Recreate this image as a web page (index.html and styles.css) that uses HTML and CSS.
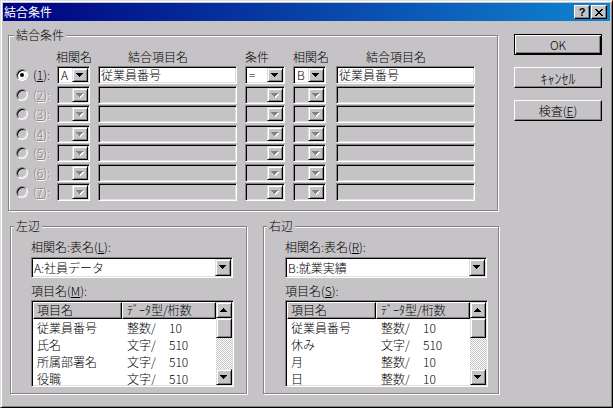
FILE: index.html
```html
<!DOCTYPE html>
<html lang="ja">
<head>
<meta charset="utf-8">
<title>結合条件</title>
<link rel="stylesheet" href="styles.css">
</head>
<body>
<div class="window">
  <div class="titlebar">
    <span class="title">結合条件</span>
    <div class="caps">
      <span class="cap q">?</span>
      <span class="cap"><svg width="8" height="7" viewBox="0 0 8 7"><path d="M0 0h2v1H0zM6 0h2v1H6zM1 1h2v1H1zM5 1h2v1H5zM2 2h4v1H2zM3 3h2v1H3zM2 4h4v1H2zM1 5h2v1H1zM5 5h2v1H5zM0 6h2v1H0zM6 6h2v1H6z"/></svg></span>
    </div>
  </div>
  <div class="client">
    <div class="main">
      <div class="group g-join">
        <span class="glabel">結合条件</span>
        <div class="hdr">
          <span class="c-radio"></span><span class="c-lbl"></span>
          <span class="c-a h ha">相関名</span>
          <span class="c-f1 h hf">結合項目名</span>
          <span class="c-cond h">条件</span>
          <span class="c-b h">相関名</span>
          <span class="c-f2 h hf">結合項目名</span>
        </div>
        <div class="rows">
          <div class="row">
            <span class="c-radio radio on"></span>
            <span class="c-lbl">(<u>1</u>):</span>
            <div class="c-a sunk combo"><span class="v">A</span><span class="dd"><svg width="8" height="6" viewBox="0 0 8 6"><path d="M0 1h7v1H0zM1 2h5v1H1zM2 3h3v1H2zM3 4h1v1H3z"/></svg></span></div>
            <div class="c-f1 sunk field">従業員番号</div>
            <div class="c-cond sunk combo"><span class="v">=</span><span class="dd"><svg width="8" height="6" viewBox="0 0 8 6"><path d="M0 1h7v1H0zM1 2h5v1H1zM2 3h3v1H2zM3 4h1v1H3z"/></svg></span></div>
            <div class="c-b sunk combo"><span class="v">B</span><span class="dd"><svg width="8" height="6" viewBox="0 0 8 6"><path d="M0 1h7v1H0zM1 2h5v1H1zM2 3h3v1H2zM3 4h1v1H3z"/></svg></span></div>
            <div class="c-f2 sunk field">従業員番号</div>
          </div>
          <div class="row">
            <span class="c-radio radio dis"></span>
            <span class="c-lbl dtext">(<u>2</u>):</span>
            <div class="c-a sunk combo dis"><span class="v"></span><span class="dd"><svg width="8" height="6" viewBox="0 0 8 6"><path fill="#fff" d="M1 2h7v1H1zM2 3h5v1H2zM3 4h3v1H3zM4 5h1v1H4z"/><path fill="#848284" d="M0 1h7v1H0zM1 2h5v1H1zM2 3h3v1H2zM3 4h1v1H3z"/></svg></span></div>
            <div class="c-f1 sunk field dis"></div>
            <div class="c-cond sunk combo dis"><span class="v"></span><span class="dd"><svg width="8" height="6" viewBox="0 0 8 6"><path fill="#fff" d="M1 2h7v1H1zM2 3h5v1H2zM3 4h3v1H3zM4 5h1v1H4z"/><path fill="#848284" d="M0 1h7v1H0zM1 2h5v1H1zM2 3h3v1H2zM3 4h1v1H3z"/></svg></span></div>
            <div class="c-b sunk combo dis"><span class="v"></span><span class="dd"><svg width="8" height="6" viewBox="0 0 8 6"><path fill="#fff" d="M1 2h7v1H1zM2 3h5v1H2zM3 4h3v1H3zM4 5h1v1H4z"/><path fill="#848284" d="M0 1h7v1H0zM1 2h5v1H1zM2 3h3v1H2zM3 4h1v1H3z"/></svg></span></div>
            <div class="c-f2 sunk field dis"></div>
          </div>
          <div class="row">
            <span class="c-radio radio dis"></span>
            <span class="c-lbl dtext">(<u>3</u>):</span>
            <div class="c-a sunk combo dis"><span class="v"></span><span class="dd"><svg width="8" height="6" viewBox="0 0 8 6"><path fill="#fff" d="M1 2h7v1H1zM2 3h5v1H2zM3 4h3v1H3zM4 5h1v1H4z"/><path fill="#848284" d="M0 1h7v1H0zM1 2h5v1H1zM2 3h3v1H2zM3 4h1v1H3z"/></svg></span></div>
            <div class="c-f1 sunk field dis"></div>
            <div class="c-cond sunk combo dis"><span class="v"></span><span class="dd"><svg width="8" height="6" viewBox="0 0 8 6"><path fill="#fff" d="M1 2h7v1H1zM2 3h5v1H2zM3 4h3v1H3zM4 5h1v1H4z"/><path fill="#848284" d="M0 1h7v1H0zM1 2h5v1H1zM2 3h3v1H2zM3 4h1v1H3z"/></svg></span></div>
            <div class="c-b sunk combo dis"><span class="v"></span><span class="dd"><svg width="8" height="6" viewBox="0 0 8 6"><path fill="#fff" d="M1 2h7v1H1zM2 3h5v1H2zM3 4h3v1H3zM4 5h1v1H4z"/><path fill="#848284" d="M0 1h7v1H0zM1 2h5v1H1zM2 3h3v1H2zM3 4h1v1H3z"/></svg></span></div>
            <div class="c-f2 sunk field dis"></div>
          </div>
          <div class="row">
            <span class="c-radio radio dis"></span>
            <span class="c-lbl dtext">(<u>4</u>):</span>
            <div class="c-a sunk combo dis"><span class="v"></span><span class="dd"><svg width="8" height="6" viewBox="0 0 8 6"><path fill="#fff" d="M1 2h7v1H1zM2 3h5v1H2zM3 4h3v1H3zM4 5h1v1H4z"/><path fill="#848284" d="M0 1h7v1H0zM1 2h5v1H1zM2 3h3v1H2zM3 4h1v1H3z"/></svg></span></div>
            <div class="c-f1 sunk field dis"></div>
            <div class="c-cond sunk combo dis"><span class="v"></span><span class="dd"><svg width="8" height="6" viewBox="0 0 8 6"><path fill="#fff" d="M1 2h7v1H1zM2 3h5v1H2zM3 4h3v1H3zM4 5h1v1H4z"/><path fill="#848284" d="M0 1h7v1H0zM1 2h5v1H1zM2 3h3v1H2zM3 4h1v1H3z"/></svg></span></div>
            <div class="c-b sunk combo dis"><span class="v"></span><span class="dd"><svg width="8" height="6" viewBox="0 0 8 6"><path fill="#fff" d="M1 2h7v1H1zM2 3h5v1H2zM3 4h3v1H3zM4 5h1v1H4z"/><path fill="#848284" d="M0 1h7v1H0zM1 2h5v1H1zM2 3h3v1H2zM3 4h1v1H3z"/></svg></span></div>
            <div class="c-f2 sunk field dis"></div>
          </div>
          <div class="row">
            <span class="c-radio radio dis"></span>
            <span class="c-lbl dtext">(<u>5</u>):</span>
            <div class="c-a sunk combo dis"><span class="v"></span><span class="dd"><svg width="8" height="6" viewBox="0 0 8 6"><path fill="#fff" d="M1 2h7v1H1zM2 3h5v1H2zM3 4h3v1H3zM4 5h1v1H4z"/><path fill="#848284" d="M0 1h7v1H0zM1 2h5v1H1zM2 3h3v1H2zM3 4h1v1H3z"/></svg></span></div>
            <div class="c-f1 sunk field dis"></div>
            <div class="c-cond sunk combo dis"><span class="v"></span><span class="dd"><svg width="8" height="6" viewBox="0 0 8 6"><path fill="#fff" d="M1 2h7v1H1zM2 3h5v1H2zM3 4h3v1H3zM4 5h1v1H4z"/><path fill="#848284" d="M0 1h7v1H0zM1 2h5v1H1zM2 3h3v1H2zM3 4h1v1H3z"/></svg></span></div>
            <div class="c-b sunk combo dis"><span class="v"></span><span class="dd"><svg width="8" height="6" viewBox="0 0 8 6"><path fill="#fff" d="M1 2h7v1H1zM2 3h5v1H2zM3 4h3v1H3zM4 5h1v1H4z"/><path fill="#848284" d="M0 1h7v1H0zM1 2h5v1H1zM2 3h3v1H2zM3 4h1v1H3z"/></svg></span></div>
            <div class="c-f2 sunk field dis"></div>
          </div>
          <div class="row">
            <span class="c-radio radio dis"></span>
            <span class="c-lbl dtext">(<u>6</u>):</span>
            <div class="c-a sunk combo dis"><span class="v"></span><span class="dd"><svg width="8" height="6" viewBox="0 0 8 6"><path fill="#fff" d="M1 2h7v1H1zM2 3h5v1H2zM3 4h3v1H3zM4 5h1v1H4z"/><path fill="#848284" d="M0 1h7v1H0zM1 2h5v1H1zM2 3h3v1H2zM3 4h1v1H3z"/></svg></span></div>
            <div class="c-f1 sunk field dis"></div>
            <div class="c-cond sunk combo dis"><span class="v"></span><span class="dd"><svg width="8" height="6" viewBox="0 0 8 6"><path fill="#fff" d="M1 2h7v1H1zM2 3h5v1H2zM3 4h3v1H3zM4 5h1v1H4z"/><path fill="#848284" d="M0 1h7v1H0zM1 2h5v1H1zM2 3h3v1H2zM3 4h1v1H3z"/></svg></span></div>
            <div class="c-b sunk combo dis"><span class="v"></span><span class="dd"><svg width="8" height="6" viewBox="0 0 8 6"><path fill="#fff" d="M1 2h7v1H1zM2 3h5v1H2zM3 4h3v1H3zM4 5h1v1H4z"/><path fill="#848284" d="M0 1h7v1H0zM1 2h5v1H1zM2 3h3v1H2zM3 4h1v1H3z"/></svg></span></div>
            <div class="c-f2 sunk field dis"></div>
          </div>
          <div class="row">
            <span class="c-radio radio dis"></span>
            <span class="c-lbl dtext">(<u>7</u>):</span>
            <div class="c-a sunk combo dis"><span class="v"></span><span class="dd"><svg width="8" height="6" viewBox="0 0 8 6"><path fill="#fff" d="M1 2h7v1H1zM2 3h5v1H2zM3 4h3v1H3zM4 5h1v1H4z"/><path fill="#848284" d="M0 1h7v1H0zM1 2h5v1H1zM2 3h3v1H2zM3 4h1v1H3z"/></svg></span></div>
            <div class="c-f1 sunk field dis"></div>
            <div class="c-cond sunk combo dis"><span class="v"></span><span class="dd"><svg width="8" height="6" viewBox="0 0 8 6"><path fill="#fff" d="M1 2h7v1H1zM2 3h5v1H2zM3 4h3v1H3zM4 5h1v1H4z"/><path fill="#848284" d="M0 1h7v1H0zM1 2h5v1H1zM2 3h3v1H2zM3 4h1v1H3z"/></svg></span></div>
            <div class="c-b sunk combo dis"><span class="v"></span><span class="dd"><svg width="8" height="6" viewBox="0 0 8 6"><path fill="#fff" d="M1 2h7v1H1zM2 3h5v1H2zM3 4h3v1H3zM4 5h1v1H4z"/><path fill="#848284" d="M0 1h7v1H0zM1 2h5v1H1zM2 3h3v1H2zM3 4h1v1H3z"/></svg></span></div>
            <div class="c-f2 sunk field dis"></div>
          </div>
        </div>
      </div>

      <div class="bottom">
        <div class="group g-side">
          <span class="glabel gl2">左辺</span>
          <div class="lbl">相関名:表名(<u>L</u>):</div>
          <div class="sunk bcombo"><span class="v">A:社員データ</span><span class="dd"><svg width="8" height="6" viewBox="0 0 8 6"><path d="M0 1h7v1H0zM1 2h5v1H1zM2 3h3v1H2zM3 4h1v1H3z"/></svg></span></div>
          <div class="lbl lbl2">項目名(<u>M</u>):</div>
          <div class="sunk list">
            <div class="lbody">
              <div class="lh"><span class="hc hc1">項目名</span><span class="hc hc2">ﾃﾞｰﾀ型/桁数</span></div>
              <div class="lr"><span class="ca">従業員番号</span><span class="cb"><span class="ty">整数/</span>10</span></div>
              <div class="lr"><span class="ca">氏名</span><span class="cb"><span class="ty">文字/</span>510</span></div>
              <div class="lr"><span class="ca">所属部署名</span><span class="cb"><span class="ty">文字/</span>510</span></div>
              <div class="lr"><span class="ca">役職</span><span class="cb"><span class="ty">文字/</span>510</span></div>
            </div>
            <div class="sb">
              <span class="sbtn"><svg width="8" height="6" viewBox="0 0 8 6"><path d="M3 1h1v1H3zM2 2h3v1H2zM1 3h5v1H1zM0 4h7v1H0z"/></svg></span>
              <span class="thumb"></span>
              <span class="track"></span>
              <span class="sbtn"><svg width="8" height="6" viewBox="0 0 8 6"><path d="M0 1h7v1H0zM1 2h5v1H1zM2 3h3v1H2zM3 4h1v1H3z"/></svg></span>
            </div>
          </div>
        </div>

        <div class="group g-side r">
          <span class="glabel gl2">右辺</span>
          <div class="lbl">相関名:表名(<u>R</u>):</div>
          <div class="sunk bcombo"><span class="v">B:就業実績</span><span class="dd"><svg width="8" height="6" viewBox="0 0 8 6"><path d="M0 1h7v1H0zM1 2h5v1H1zM2 3h3v1H2zM3 4h1v1H3z"/></svg></span></div>
          <div class="lbl lbl2">項目名(<u>S</u>):</div>
          <div class="sunk list">
            <div class="lbody">
              <div class="lh"><span class="hc hc1">項目名</span><span class="hc hc2">ﾃﾞｰﾀ型/桁数</span></div>
              <div class="lr"><span class="ca">従業員番号</span><span class="cb"><span class="ty">整数/</span>10</span></div>
              <div class="lr"><span class="ca">休み</span><span class="cb"><span class="ty">文字/</span>510</span></div>
              <div class="lr"><span class="ca">月</span><span class="cb"><span class="ty">整数/</span>10</span></div>
              <div class="lr"><span class="ca">日</span><span class="cb"><span class="ty">整数/</span>10</span></div>
            </div>
            <div class="sb">
              <span class="sbtn"><svg width="8" height="6" viewBox="0 0 8 6"><path d="M3 1h1v1H3zM2 2h3v1H2zM1 3h5v1H1zM0 4h7v1H0z"/></svg></span>
              <span class="thumb"></span>
              <span class="track"></span>
              <span class="sbtn"><svg width="8" height="6" viewBox="0 0 8 6"><path d="M0 1h7v1H0zM1 2h5v1H1zM2 3h3v1H2zM3 4h1v1H3z"/></svg></span>
            </div>
          </div>
        </div>
      </div>
    </div>

    <div class="btns">
      <button class="btn def">OK</button>
      <button class="btn kana">ｷｬﾝｾﾙ</button>
      <button class="btn">検査(<u>E</u>)</button>
    </div>
  </div>
</div>
</body>
</html>
```

FILE: styles.css
```css
* { box-sizing: border-box; }

html, body {
  margin: 0;
  padding: 0;
}

body {
  background: #c6c3c6;
  font-family: "Noto Sans CJK JP", "Noto Sans", sans-serif;
  font-size: 12px;
  font-weight: 300;
  line-height: 14px;
  color: #000;
}

.window {
  width: 613px;
  height: 408px;
  border: 1px solid;
  border-color: #dfdfdf #000 #000 #dfdfdf;
  box-shadow: inset 1px 1px #fff, inset -1px -1px #848284;
  padding: 2px;
  background: #c6c3c6;
  display: flex;
  flex-direction: column;
}

/* title bar */
.titlebar {
  flex: none;
  height: 18px;
  display: flex;
  align-items: center;
  padding: 0 3px 0 1px;
  background: linear-gradient(to right, #000080, #1084d0);
  color: #fff;
}
.title { flex: 1; white-space: nowrap; font-weight: 400; }
.caps { display: flex; gap: 1px; }
.cap {
  width: 16px;
  height: 14px;
  display: flex;
  align-items: center;
  justify-content: center;
  background: #c6c3c6;
  border: 1px solid;
  border-color: #fff #000 #000 #fff;
  box-shadow: inset -1px -1px #848284;
  color: #000;
}
.cap.q {
  font-family: "Liberation Sans", sans-serif;
  font-weight: bold;
  font-size: 11px;
  line-height: 12px;
}
.cap svg { display: block; }

/* client */
.client {
  flex: 1;
  display: flex;
  padding: 14px 0 0 5px;
}
.main { width: 491px; flex: none; }

.group {
  position: relative;
  border: 1px solid #848284;
  box-shadow: inset 1px 1px #fff, 1px 1px #fff;
}
.glabel {
  position: absolute;
  top: -8px;
  left: 5px;
  padding: 0 2px;
  background: #c6c3c6;
  white-space: nowrap;
}
.gl2 { left: 3px; }

/* join group */
.g-join {
  width: 490px;
  height: 176px;
  padding: 14px 0 0 7px;
}
.hdr { display: flex; height: 14px; }
.h { white-space: nowrap; }
.ha { text-indent: -1px; }
.hf { padding-left: 30px; }
.rows {
  display: flex;
  flex-direction: column;
  gap: 1.5px;
  margin-top: 2px;
}
.row { display: flex; align-items: center; height: 18px; }

.c-radio { width: 12px; flex: none; }
.c-lbl { width: 24px; margin-left: 5px; flex: none; white-space: nowrap; }
.c-a { width: 33px; flex: none; }
.c-f1 { width: 139px; margin-left: 8px; flex: none; }
.c-cond { width: 40px; margin-left: 8px; flex: none; }
.c-b { width: 33px; margin-left: 8px; flex: none; }
.c-f2 { width: 139px; margin-left: 10px; flex: none; }

.dtext {
  color: #848284;
  text-shadow: 1px 1px #fff;
}

.radio {
  position: relative;
  height: 12px;
  border-radius: 50%;
  border: 1px solid;
  border-color: #848284 #fff #fff #848284;
  box-shadow: inset 1px 1px #000, inset -1px -1px #dfdfdf;
  background: #fff;
}
.radio.dis { background: #c6c3c6; }
.radio.on::after {
  content: "";
  position: absolute;
  left: 3px;
  top: 3px;
  width: 4px;
  height: 4px;
  border-radius: 50%;
  background: #000;
}

.sunk {
  border: 1px solid;
  border-color: #848284 #fff #fff #848284;
  box-shadow: inset 1px 1px #000, inset -1px -1px #dfdfdf;
  padding: 1px;
  background: #fff;
}
.sunk.dis { background: #c6c3c6; }

.combo { display: flex; height: 18px; }
.combo .v {
  flex: 1;
  min-width: 0;
  padding-left: 2px;
  line-height: 14px;
  white-space: nowrap;
}
.dd {
  width: 16px;
  flex: none;
  display: flex;
  align-items: center;
  justify-content: center;
  background: #c6c3c6;
  border: 1px solid;
  border-color: #dfdfdf #000 #000 #dfdfdf;
  box-shadow: inset 1px 1px #fff, inset -1px -1px #848284;
}
.dd svg, .sbtn svg { display: block; }

.field {
  height: 18px;
  padding-left: 2px;
  line-height: 14px;
  white-space: nowrap;
}

/* bottom groups */
.bottom {
  display: flex;
  gap: 16px;
  margin-top: 15px;
  padding-left: 2px;
}
.g-side {
  width: 237px;
  height: 168px;
  padding: 13px 0 0 20px;
}
.g-side.r { width: 236px; padding-left: 21px; }
.lbl { height: 14px; white-space: nowrap; }
.lbl2 { margin-top: 6px; }

.bcombo {
  width: 202px;
  height: 21px;
  margin-top: 3px;
  display: flex;
}
.bcombo .v {
  flex: 1;
  padding-left: 1px;
  line-height: 17px;
  white-space: nowrap;
}
.bcombo .dd { align-items: flex-start; padding-top: 4px; }

.list {
  width: 203px;
  height: 87px;
  margin-top: 2px;
  display: flex;
}
.lbody {
  flex: 1;
  display: flex;
  flex-direction: column;
  overflow: hidden;
}
.lh { display: flex; height: 17px; flex: none; }
.hc {
  flex: none;
  background: #c6c3c6;
  border: 1px solid;
  border-color: #fff #000 #000 #fff;
  box-shadow: inset -1px -1px #848284;
  line-height: 14px;
  white-space: nowrap;
}
.hc1 { width: 89px; padding-left: 3px; }
.hc2 { width: 94px; padding-left: 4px; }

.lr {
  display: flex;
  height: 17px;
  flex: none;
  line-height: 17px;
  white-space: nowrap;
}
.ca { width: 89px; padding-left: 4px; flex: none; }
.cb { padding-left: 5px; }
.ty { display: inline-block; width: 42px; }

.sb {
  width: 16px;
  flex: none;
  display: flex;
  flex-direction: column;
}
.sbtn, .thumb {
  flex: none;
  background: #c6c3c6;
  border: 1px solid;
  border-color: #dfdfdf #000 #000 #dfdfdf;
  box-shadow: inset 1px 1px #fff, inset -1px -1px #848284;
}
.sbtn {
  height: 16px;
  display: flex;
  align-items: center;
  justify-content: center;
}
.thumb { height: 20px; }
.track {
  flex: 1;
  background: repeating-conic-gradient(#fff 0 25%, #c6c3c6 0 50%) 0 0 / 2px 2px;
}

/* buttons */
.btns {
  display: flex;
  flex-direction: column;
  gap: 12px;
  margin: -1px 0 0 15px;
}
.btn {
  width: 88px;
  height: 21px;
  padding: 0;
  margin: 0;
  font: inherit;
  color: #000;
  background: #c6c3c6;
  border: 1px solid;
  border-color: #fff #000 #000 #fff;
  box-shadow: inset -1px -1px #848284;
  display: flex;
  align-items: center;
  justify-content: center;
  appearance: none;
}
.btn.kana { font-size: 14px; }
.btn.def {
  border-color: #000;
  box-shadow: inset 1px 1px #fff, inset -1px -1px #000, inset -2px -2px #848284;
}
```
